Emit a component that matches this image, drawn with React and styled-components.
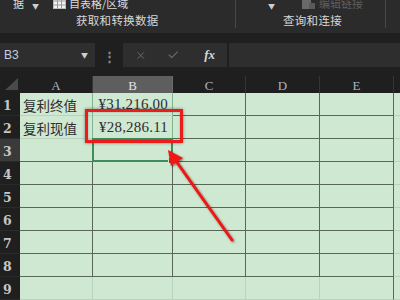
import React from "react";
import styled, { createGlobalStyle } from "styled-components";
import { X, Check } from "lucide-react";

const Global = createGlobalStyle`
  html, body { margin: 0; padding: 0; }
  body {
    width: 400px; height: 300px; overflow: hidden;
    background: #1f1f1f;
    font-family: "Noto Sans CJK SC", "Noto Sans", sans-serif;
  }
`;

const Page = styled.div`
  position: relative;
  width: 400px;
  height: 300px;
  overflow: hidden;
  display: flex;
  flex-direction: column;
  background: #1f1f1f;
`;

const Ribbon = styled.div`
  height: 33px;
  background: #2b2b2b;
  display: grid;
  grid-template-columns: 236px 150px 1fr;
  flex-shrink: 0;
`;

const Group = styled.div`
  display: flex;
  flex-direction: column;
  border-right: ${(p) => (p.$sep ? "1px solid #474747" : "none")};
  margin-bottom: 5px;
  position: relative;
`;

const TopRow = styled.div`
  height: 11px;
  overflow: hidden;
  display: flex;
  align-items: flex-end;
  padding-left: ${(p) => p.$pl}px;
  gap: ${(p) => p.$gap || 4}px;
`;

const TopItem = styled.span`
  height: 16px;
  line-height: 16px;
  font-size: 11px;
  color: ${(p) => (p.$dim ? "#5e5e5e" : "#dcdcdc")};
  display: inline-flex;
  align-items: center;
  gap: 3px;
  white-space: nowrap;
  margin-left: ${(p) => p.$ml || 0}px;
`;

const Caret = styled.span`
  font-size: 7px;
  color: #cfcfcf;
  margin-left: ${(p) => p.$ml || 0}px;
  margin-right: ${(p) => p.$mr || 0}px;
`;

const GroupLabel = styled.div`
  flex: 1;
  display: flex;
  align-items: center;
  justify-content: flex-start;
  padding-left: ${(p) => p.$pl || 0}px;
  font-size: 11.5px;
  color: #d6d6d6;
  letter-spacing: 0.3px;
`;

const Band = styled.div`
  height: ${(p) => p.$h}px;
  background: #1f1f1f;
  flex-shrink: 0;
`;

const FormulaBar = styled.div`
  height: 24px;
  display: grid;
  grid-template-columns: 95px 28px 104px 2px 1fr;
  flex-shrink: 0;
`;

const Panel = styled.div`
  background: #2e2e2e;
  display: flex;
  align-items: center;
  padding: 0 ${(p) => p.$px || 0}px;
  gap: ${(p) => p.$gap || 0}px;
`;

const NameText = styled.span`
  font-family: "Liberation Sans", sans-serif;
  font-size: 12px;
  color: #c3cfe2;
  flex: 1;
`;

const Dots = styled.div`
  display: flex;
  align-items: center;
  justify-content: center;
  color: #8e8e8e;
  font-size: 13px;
  font-weight: bold;
`;

const Fx = styled.span`
  font-family: "Liberation Serif", serif;
  font-style: italic;
  font-weight: bold;
  font-size: 13px;
  color: #d8d8d8;
  margin-left: 5px;
`;

const Sheet = styled.div`
  display: grid;
  grid-template-columns: 20px 73px 80px 73px 74px 74px 1fr;
  grid-template-rows: 17px repeat(9, 23px);
  flex: 1;
  background: #cfe8d1;
`;

const Corner = styled.div`
  background: #1f1f1f;
  position: relative;
`;

const ColHead = styled.div`
  background: ${(p) => (p.$active ? "#5e5e5e" : "#1f1f1f")};
  border-right: 1px solid ${(p) => (p.$active ? "#6b6b6b" : "#353535")};
  color: ${(p) => (p.$active ? "#e2e2e2" : "#a9b3c4")};
  font-family: "Liberation Serif", serif;
  font-size: 13px;
  display: flex;
  align-items: center;
  justify-content: center;
  padding-top: 2px;
`;

const RowHead = styled.div`
  background: ${(p) => (p.$active ? "#3a3a3a" : "#1f1f1f")};
  color: #c6c6c6;
  font-family: "DejaVu Serif", serif;
  font-weight: bold;
  font-size: 12.5px;
  display: flex;
  align-items: flex-end;
  padding: 0 0 2px 3px;
  border-bottom: 1px solid #2a2a2a;
`;

const Cell = styled.div`
  position: relative;
  border-right: 1px solid ${(p) => p.$vr};
  border-bottom: 1px solid ${(p) => p.$hb};
  display: flex;
  align-items: center;
  justify-content: ${(p) => (p.$num ? "flex-end" : "flex-start")};
  padding: 1px 4px 0 3px;
  font-family: "Liberation Serif", "Noto Sans CJK SC", serif;
  font-size: ${(p) => (p.$num ? 15 : 13.5)}px;
  letter-spacing: ${(p) => (p.$num ? 0.2 : 0)}px;
  color: #2e2e2e;
  white-space: nowrap;
`;

const Selection = styled.div`
  position: absolute;
  left: -1px;
  top: -1px;
  right: -1px;
  bottom: -1px;
  border: 2px solid #3f8c5c;
  pointer-events: none;
`;

const Handle = styled.div`
  position: absolute;
  right: -4px;
  bottom: -4px;
  width: 5px;
  height: 5px;
  background: #2f6e45;
  border: 1px solid #cfe8d1;
`;

const RedBox = styled.div`
  position: absolute;
  left: 85px;
  top: 109px;
  width: 92px;
  height: 28px;
  border: 3px solid #ec1c1c;
  box-shadow: 0 0 3px rgba(0, 0, 0, 0.45), inset 0 0 2px rgba(0, 0, 0, 0.3);
  pointer-events: none;
`;

const Overlay = styled.svg`
  position: absolute;
  left: 0;
  top: 0;
  pointer-events: none;
`;

const CornerMark = styled.svg`
  position: absolute;
  left: 0;
  top: 0;
`;

const TableIcon = () => (
  <svg width="13" height="12" viewBox="0 0 13 12">
    <rect x="0.5" y="0.5" width="12" height="11" fill="#f2f2f2" stroke="#bdbdbd" />
    <path d="M0.5 4h12M0.5 8h12M4.5 0.5v11M8.5 0.5v11" stroke="#9a9a9a" strokeWidth="1" />
  </svg>
);

const LinkIcon = () => (
  <svg width="15" height="14" viewBox="0 0 15 14">
    <rect x="1" y="1" width="9" height="12" fill="#6a6a6a" />
    <rect x="8" y="7" width="6" height="6" fill="#5a5a5a" />
  </svg>
);

const GRID_DARK = "#58675a";
const GRID_LIGHT = "#b9d3bc";
const GRID_GREEN = "#7fb592";

const cols = ["A", "B", "C", "D", "E", ""];

export default function App() {
  const data = {
    "0-0": "复利终值",
    "0-1": "¥31,216.00",
    "1-0": "复利现值",
    "1-1": "¥28,286.11",
  };

  const rows = [];
  for (let r = 0; r < 9; r++) {
    rows.push(
      <RowHead key={`rh${r}`} $active={r === 2}>
        {r + 1}
      </RowHead>
    );
    for (let c = 0; c < 6; c++) {
      const bordered = r < 8 && c < 5;
      let vr = bordered ? GRID_DARK : GRID_LIGHT;
      let hb = bordered ? GRID_DARK : GRID_LIGHT;
      if (r < 3 && c === 0) {
        vr = GRID_GREEN;
        hb = r === 2 ? GRID_DARK : GRID_LIGHT;
      }
      if (r < 3 && c === 1) {
        vr = GRID_GREEN;
        hb = r === 2 ? GRID_GREEN : GRID_LIGHT;
      }
      if (c === 4 && r === 8) vr = GRID_DARK;
      const key = `${r}-${c}`;
      rows.push(
        <Cell key={key} $vr={vr} $hb={hb} $num={c === 1}>
          {data[key]}
          {r === 2 && c === 1 && (
            <Selection>
              <Handle />
            </Selection>
          )}
        </Cell>
      );
    }
  }

  return (
    <>
      <Global />
      <Page>
        <Ribbon>
          <Group $sep>
            <TopRow $pl={13} $gap={0}>
              <TopItem>据</TopItem>
              <Caret $ml={4}>▼</Caret>
              <TopItem $ml={10}>
                <TableIcon />
                自表格/区域
              </TopItem>
            </TopRow>
            <GroupLabel $pl={76}>获取和转换数据</GroupLabel>
          </Group>
          <Group $sep>
            <TopRow $pl={32} $gap={0}>
              <Caret>▼</Caret>
              <TopItem $dim $ml={22}>
                <LinkIcon />
                编辑链接
              </TopItem>
            </TopRow>
            <GroupLabel $pl={47}>查询和连接</GroupLabel>
          </Group>
          <Group />
        </Ribbon>
        <Band $h={10} />
        <FormulaBar>
          <Panel $px={4}>
            <NameText>B3</NameText>
            <Caret $mr={3}>▼</Caret>
          </Panel>
          <Dots>⋮</Dots>
          <Panel $px={12} $gap={20}>
            <X size={13} color="#6c6c6c" strokeWidth={2} />
            <Check size={14} color="#6c6c6c" strokeWidth={2.2} />
            <Fx>fx</Fx>
          </Panel>
          <Band $h={24} />
          <Panel />
        </FormulaBar>
        <Band $h={9} />
        <Sheet>
          <Corner>
            <CornerMark width="20" height="17">
              <polygon points="5,14 18,14 18,2" fill="#4a4a4a" />
            </CornerMark>
          </Corner>
          {cols.map((c, i) => (
            <ColHead key={i} $active={c === "B"}>
              {c}
            </ColHead>
          ))}
          {rows}
        </Sheet>
        <RedBox />
        <Overlay width="400" height="300">
          <defs>
            <filter id="sh" x="-20%" y="-20%" width="140%" height="140%">
              <feDropShadow dx="1" dy="1" stdDeviation="1.2" floodColor="#000" floodOpacity="0.5" />
            </filter>
          </defs>
          <g filter="url(#sh)">
            <line x1="232" y1="240" x2="176" y2="161" stroke="#ee1515" strokeWidth="3" strokeLinecap="round" />
            <polygon points="168,150 183,158 171,166" fill="#ee1515" />
          </g>
        </Overlay>
      </Page>
    </>
  );
}
